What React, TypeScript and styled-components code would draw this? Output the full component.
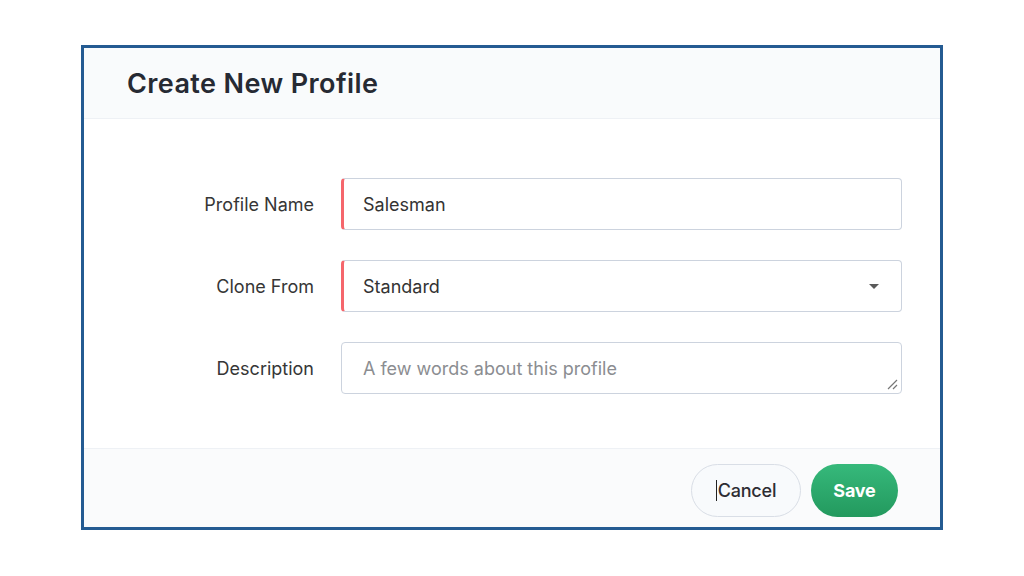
import React from "react";
import styled, { createGlobalStyle } from "styled-components";

const Global = createGlobalStyle`
  html, body { margin: 0; padding: 0; background: #ffffff; }
  body { font-family: Inter, "Noto Sans", sans-serif; color: #313131; }
  * { box-sizing: border-box; }
`;

const Page = styled.div`
  width: 1024px;
  height: 576px;
  padding: 45px 0 0 81px;
`;

const Frame = styled.div`
  width: 862px;
  height: 485px;
  border: 3px solid #245b92;
  display: flex;
  flex-direction: column;
  background: #ffffff;
  overflow: hidden;
`;

const Header = styled.div`
  height: 71px;
  flex: none;
  display: flex;
  align-items: center;
  padding-left: 43px;
  background: #f9fbfc;
  border-bottom: 1px solid #eef1f5;
`;

const Title = styled.h1`
  margin: 0;
  font-size: 27px;
  font-weight: 600;
  letter-spacing: 0.4px;
  color: #262a33;
`;

const Body = styled.div`
  flex: 1;
  display: grid;
  grid-template-columns: 230px 1fr;
  column-gap: 27px;
  row-gap: 30px;
  align-content: start;
  padding: 59px 38px 0 0;
`;

const Label = styled.label`
  align-self: center;
  text-align: right;
  font-size: 18px;
  letter-spacing: 0;
  color: #363636;
`;

const Field = styled.div<{ $required?: boolean }>`
  position: relative;
  height: 52px;
  display: flex;
  align-items: center;
  padding-left: 19px;
  padding-right: 24px;
  border: 1px solid #ccd3de;
  border-left: ${(p) => (p.$required ? "3px solid #f5666c" : "1px solid #ccd3de")};
  border-radius: 4px;
  background: #ffffff;
  font-size: 18px;
  letter-spacing: 0;
  color: #333333;
`;

const Value = styled.span<{ $placeholder?: boolean }>`
  flex: 1;
  padding-left: ${(p) => (p.$placeholder ? "2px" : "0")};
  color: ${(p) => (p.$placeholder ? "#8b8d91" : "#333333")};
`;

const Caret = styled.span`
  width: 0;
  height: 0;
  border-left: 5px solid transparent;
  border-right: 5px solid transparent;
  border-top: 5px solid #5a5a5a;
  margin-right: -2px;
`;

const Resize = styled.svg`
  position: absolute;
  right: 3px;
  bottom: 3px;
`;

const Footer = styled.div`
  height: 79px;
  flex: none;
  display: flex;
  justify-content: flex-end;
  align-items: flex-start;
  gap: 10px;
  padding: 15px 42px 0 0;
  background: #fafbfc;
  border-top: 1px solid #eef1f5;
`;

const Button = styled.button<{ $primary?: boolean }>`
  height: 53px;
  border-radius: 27px;
  font-family: Inter, "Noto Sans", sans-serif;
  font-size: 18px;
  letter-spacing: -0.2px;
  cursor: pointer;
  display: flex;
  align-items: center;
  justify-content: center;
  ${(p) =>
    p.$primary
      ? `
    width: 87px;
    border: none;
    color: #ffffff;
    font-weight: 700;
    background: linear-gradient(#36b97b, #23995e);
  `
      : `
    width: 110px;
    border: 1px solid #d9dee6;
    color: #2d2d33;
    font-weight: 500;
    background: #f8fafc;
  `}
`;

const TextCursor = styled.span`
  display: inline-block;
  width: 1px;
  height: 21px;
  background: #222;
  margin-right: 1px;
`;

export default function App() {
  return (
    <>
      <Global />
      <Page>
        <Frame>
          <Header>
            <Title>Create New Profile</Title>
          </Header>
          <Body>
            <Label>Profile Name</Label>
            <Field $required>
              <Value>Salesman</Value>
            </Field>
            <Label>Clone From</Label>
            <Field $required>
              <Value>Standard</Value>
              <Caret />
            </Field>
            <Label>Description</Label>
            <Field>
              <Value $placeholder>A few words about this profile</Value>
              <Resize width="12" height="12" viewBox="0 0 12 12">
                <path d="M11 2 L2 11 M11 7 L7 11" stroke="#777" strokeWidth="1.2" fill="none" />
              </Resize>
            </Field>
          </Body>
          <Footer>
            <Button>
              <TextCursor />
              Cancel
            </Button>
            <Button $primary>Save</Button>
          </Footer>
        </Frame>
      </Page>
    </>
  );
}
